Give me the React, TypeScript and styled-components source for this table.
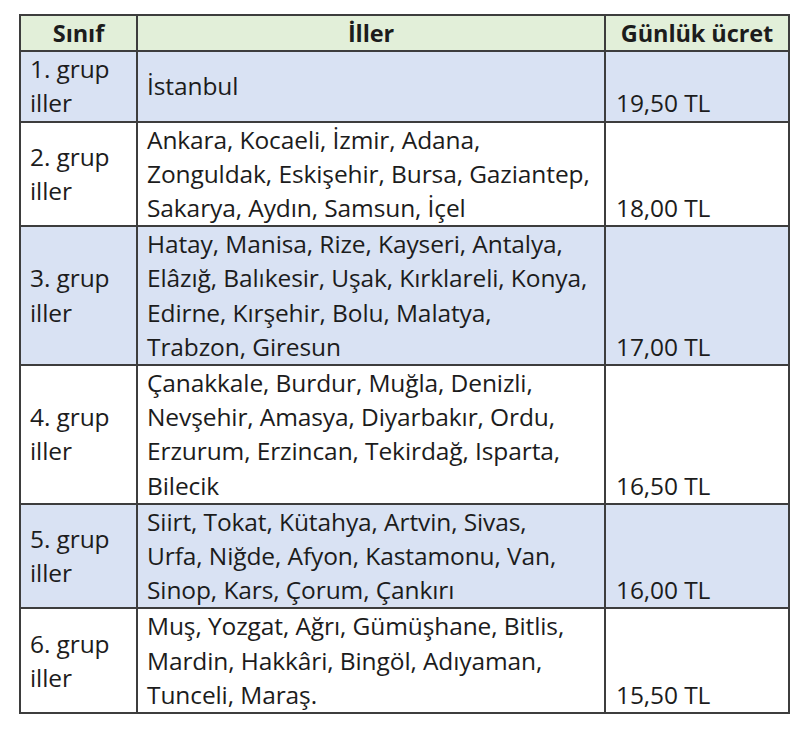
import React from "react";
import styled, { createGlobalStyle } from "styled-components";

const GlobalStyle = createGlobalStyle`
  html, body {
    margin: 0;
    padding: 0;
    background: #ffffff;
  }
  body {
    font-family: "Open Sans", Lato, "Liberation Sans", sans-serif;
    color: #1c1c1c;
  }
`;

const Page = styled.div`
  padding: 14px 0 0 19px;
  width: 800px;
  height: 729px;
  box-sizing: border-box;
`;

const Table = styled.table`
  border-collapse: collapse;
  table-layout: fixed;
  width: 769px;
  font-size: 24.5px;
  line-height: 34.2px;
  letter-spacing: -0.1px;
  border: 2px solid #3d3d3d;
`;

const HeadRow = styled.tr`
  background: #e2efd9;
`;

const HeadCell = styled.th`
  border: 2px solid #3d3d3d;
  font-weight: 700;
  font-size: 23.5px;
  text-align: center;
  height: 33px;
  padding: 0;
  white-space: nowrap;
`;

const Row = styled.tr<{ $shaded: boolean }>`
  background: ${(p) => (p.$shaded ? "#d9e2f3" : "#ffffff")};
`;

const ClassCell = styled.td`
  border: 2px solid #3d3d3d;
  padding: 0 0 0 9px;
  vertical-align: middle;
`;

const CityCell = styled.td`
  border: 2px solid #3d3d3d;
  padding: 0 0 0 9px;
  vertical-align: middle;
  white-space: nowrap;
`;

const FeeCell = styled.td`
  border: 2px solid #3d3d3d;
  padding: 0 0 0 10px;
  vertical-align: bottom;
  white-space: nowrap;
`;

const Line = styled.div`
  display: block;
`;

const groups = [
  { id: 1, cities: ["İstanbul"], fee: "19,50 TL" },
  {
    id: 2,
    cities: [
      "Ankara, Kocaeli, İzmir, Adana,",
      "Zonguldak, Eskişehir, Bursa, Gaziantep,",
      "Sakarya, Aydın, Samsun, İçel",
    ],
    fee: "18,00 TL",
  },
  {
    id: 3,
    cities: [
      "Hatay, Manisa, Rize, Kayseri, Antalya,",
      "Elâzığ, Balıkesir, Uşak, Kırklareli, Konya,",
      "Edirne, Kırşehir, Bolu, Malatya,",
      "Trabzon, Giresun",
    ],
    fee: "17,00 TL",
  },
  {
    id: 4,
    cities: [
      "Çanakkale, Burdur, Muğla, Denizli,",
      "Nevşehir, Amasya, Diyarbakır, Ordu,",
      "Erzurum, Erzincan, Tekirdağ, Isparta,",
      "Bilecik",
    ],
    fee: "16,50 TL",
  },
  {
    id: 5,
    cities: [
      "Siirt, Tokat, Kütahya, Artvin, Sivas,",
      "Urfa, Niğde, Afyon, Kastamonu, Van,",
      "Sinop, Kars, Çorum, Çankırı",
    ],
    fee: "16,00 TL",
  },
  {
    id: 6,
    cities: [
      "Muş, Yozgat, Ağrı, Gümüşhane, Bitlis,",
      "Mardin, Hakkâri, Bingöl, Adıyaman,",
      "Tunceli, Maraş.",
    ],
    fee: "15,50 TL",
  },
];

export default function App() {
  return (
    <Page>
      <GlobalStyle />
      <Table>
        <colgroup>
          <col style={{ width: 117 }} />
          <col style={{ width: 468 }} />
          <col style={{ width: 184 }} />
        </colgroup>
        <thead>
          <HeadRow>
            <HeadCell>Sınıf</HeadCell>
            <HeadCell>İller</HeadCell>
            <HeadCell>Günlük ücret</HeadCell>
          </HeadRow>
        </thead>
        <tbody>
          {groups.map((g) => (
            <Row key={g.id} $shaded={g.id % 2 === 1}>
              <ClassCell>
                <Line>{g.id}. grup</Line>
                <Line>iller</Line>
              </ClassCell>
              <CityCell>
                {g.cities.map((c) => (
                  <Line key={c}>{c}</Line>
                ))}
              </CityCell>
              <FeeCell>{g.fee}</FeeCell>
            </Row>
          ))}
        </tbody>
      </Table>
    </Page>
  );
}
